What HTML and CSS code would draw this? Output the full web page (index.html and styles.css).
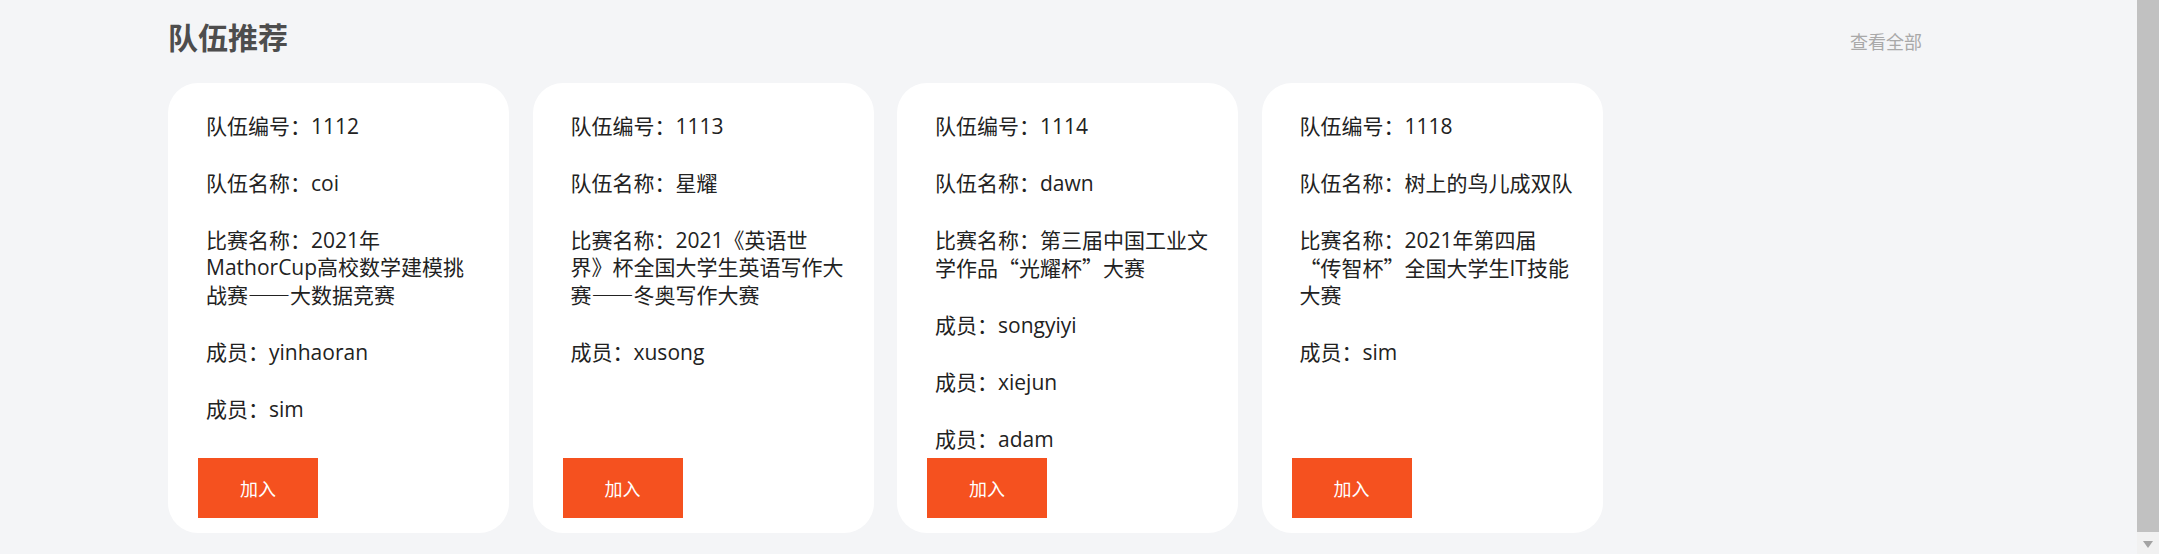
FILE: index.html
```html
<!DOCTYPE html>
<html lang="zh-CN">
<head>
<meta charset="utf-8">
<title>队伍推荐</title>
<link rel="stylesheet" href="styles.css">
</head>
<body>
<div class="page">
  <main class="main">
    <section class="section">
      <div class="section-head">
        <h2 class="section-title">队伍推荐</h2>
        <a class="more" href="#">查看全部</a>
      </div>
      <div class="cards">
        <div class="card">
          <div class="info">
            <p>队伍编号：1112</p>
            <p>队伍名称：coi</p>
            <p>比赛名称：2021年MathorCup高校数学建模挑战赛<span class="fw">——</span>大数据竞赛</p>
            <p>成员：yinhaoran</p>
            <p>成员：sim</p>
          </div>
          <button class="join">加入</button>
        </div>
        <div class="card">
          <div class="info">
            <p>队伍编号：1113</p>
            <p>队伍名称：星耀</p>
            <p>比赛名称：2021《英语世界》杯全国大学生英语写作大赛<span class="fw">——</span>冬奥写作大赛</p>
            <p>成员：xusong</p>
          </div>
          <button class="join">加入</button>
        </div>
        <div class="card">
          <div class="info">
            <p>队伍编号：1114</p>
            <p>队伍名称：dawn</p>
            <p>比赛名称：第三届中国工业文学作品<span class="fw">“</span>光耀杯<span class="fw">”</span>大赛</p>
            <p>成员：songyiyi</p>
            <p>成员：xiejun</p>
            <p>成员：adam</p>
          </div>
          <button class="join">加入</button>
        </div>
        <div class="card">
          <div class="info">
            <p>队伍编号：1118</p>
            <p>队伍名称：树上的鸟儿成双队</p>
            <p>比赛名称：2021年第四届<span class="fw">“</span>传智杯<span class="fw">”</span>全国大学生IT技能大赛</p>
            <p>成员：sim</p>
          </div>
          <button class="join">加入</button>
        </div>
      </div>
    </section>
  </main>
  <div class="scrollbar" aria-hidden="true">
    <div class="scroll-thumb"></div>
    <div class="scroll-btn">
      <svg width="10" height="7" viewBox="0 0 10 7"><polygon points="0,0 10,0 5,7" fill="#a3a3a3"/></svg>
    </div>
  </div>
</div>
</body>
</html>
```
FILE: styles.css
```css
* { box-sizing: border-box; }

html, body {
  margin: 0;
  padding: 0;
  height: 100%;
  overflow: hidden;
  background: #f4f5f7;
}

body {
  font-family: "Open Sans", "Noto Sans CJK SC", sans-serif;
  color: #222;
  text-spacing-trim: space-all;
}

.page {
  display: flex;
  height: 554px;
}

.main {
  flex: 1;
  padding-top: 16px;
}

.scrollbar {
  width: 22px;
  flex: none;
  display: flex;
  flex-direction: column;
  background: #f1f1f1;
}

.scroll-thumb {
  flex: 1;
  background: #c1c1c1;
}

.scroll-btn {
  height: 22px;
  display: flex;
  align-items: center;
  justify-content: center;
  padding-top: 2px;
}

.section {
  width: 1754px;
  margin-left: 168px;
}

.section-head {
  display: flex;
  justify-content: space-between;
  align-items: baseline;
}

.section-title {
  margin: 0;
  font-family: "Noto Sans CJK SC", sans-serif;
  font-size: 30px;
  line-height: 40px;
  font-weight: 700;
  color: #4d4d4d;
}

.more {
  font-family: "Noto Sans CJK SC", sans-serif;
  font-size: 18px;
  line-height: 24px;
  color: #a9a9a9;
  text-decoration: none;
}

.cards {
  display: flex;
  gap: 23.5px;
  margin-top: 27px;
}

.card {
  width: 341px;
  height: 450px;
  background: #fff;
  border-radius: 30px;
  padding: 0 28px 15px 30px;
  display: flex;
  flex-direction: column;
}

.info {
  flex: 1;
  padding: 30px 0 0 8px;
  display: flex;
  flex-direction: column;
  gap: 30px;
}

.info p {
  margin: 0;
  font-size: 21px;
  line-height: 27px;
  text-spacing-trim: space-all;
}

.fw {
  font-family: "Noto Sans CJK SC", sans-serif;
}

.join {
  width: 120px;
  height: 60px;
  border: 0;
  border-radius: 0;
  background: #f5511f;
  color: #fff;
  font-family: "Noto Sans CJK SC", sans-serif;
  font-size: 18px;
  padding: 0;
  flex: none;
}
```
